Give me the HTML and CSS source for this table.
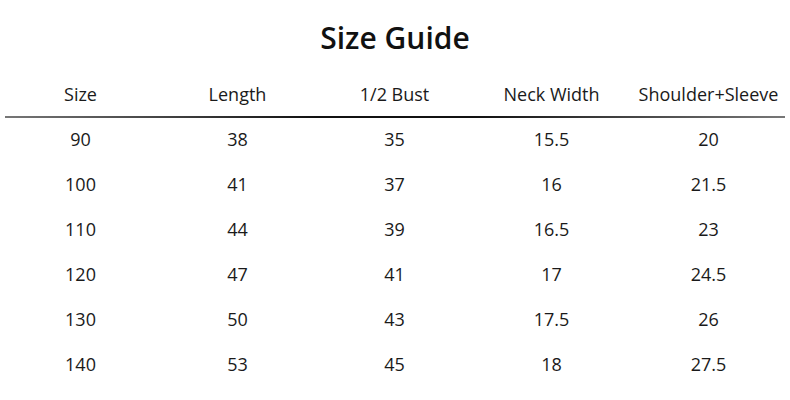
FILE: index.html
```html
<!DOCTYPE html>
<html>
<head>
<meta charset="utf-8">
<link rel="stylesheet" href="styles.css">
</head>
<body>
<div class="page">
  <h1 class="title">Size Guide</h1>
  <div class="table">
    <div class="row head">
      <div>Size</div><div>Length</div><div>1/2 Bust</div><div>Neck Width</div><div>Shoulder+Sleeve</div>
    </div>
    <div class="rule"></div>
    <div class="row body"><div>90</div><div>38</div><div>35</div><div>15.5</div><div>20</div></div>
    <div class="row body"><div>100</div><div>41</div><div>37</div><div>16</div><div>21.5</div></div>
    <div class="row body"><div>110</div><div>44</div><div>39</div><div>16.5</div><div>23</div></div>
    <div class="row body"><div>120</div><div>47</div><div>41</div><div>17</div><div>24.5</div></div>
    <div class="row body"><div>130</div><div>50</div><div>43</div><div>17.5</div><div>26</div></div>
    <div class="row body"><div>140</div><div>53</div><div>45</div><div>18</div><div>27.5</div></div>
  </div>
</div>
</body>
</html>
```
FILE: styles.css
```css
html, body {
  margin: 0;
  padding: 0;
  background: #ffffff;
}
.page {
  width: 790px;
  height: 400px;
  font-family: "Open Sans", "Noto Sans", sans-serif;
  color: #1a1a1a;
}
.title {
  margin: 0;
  height: 72px;
  line-height: 76px;
  text-align: center;
  font-size: 30px;
  font-weight: 600;
  color: #111;
}
.table {
  display: flex;
  flex-direction: column;
}
.row {
  display: grid;
  grid-template-columns: repeat(5, 157px);
  padding-left: 2px;
  height: 45px;
  box-sizing: border-box;
  align-items: center;
  font-size: 18px;
}
.row > div {
  text-align: center;
}
.head {
  height: 44px;
}
.body {
  padding-bottom: 4px;
}
.rule {
  margin: 0 5px;
  height: 2px;
  background: linear-gradient(to right, #777 0%, #111 40%, #111 60%, #777 100%);
}
```
